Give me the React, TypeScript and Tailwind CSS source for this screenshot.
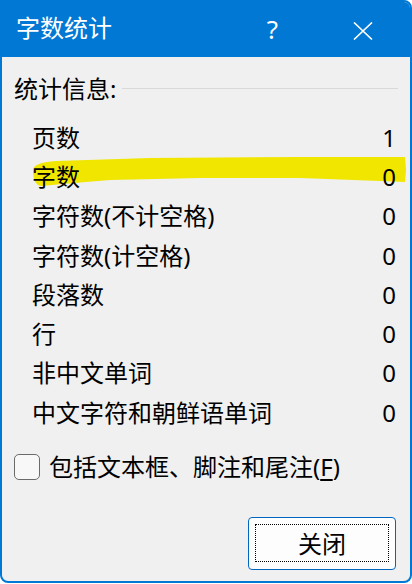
const rows: [string, string][] = [
  ["页数", "1"],
  ["字数", "0"],
  ["字符数(不计空格)", "0"],
  ["字符数(计空格)", "0"],
  ["段落数", "0"],
  ["行", "0"],
  ["非中文单词", "0"],
  ["中文字符和朝鲜语单词", "0"],
];

const font = "font-['Noto_Sans','Noto_Sans_CJK_SC',sans-serif]";

function Highlight() {
  // yellow marker stroke over the 字数 row
  return (
    <svg
      className="pointer-events-none absolute left-0 top-0"
      width="412"
      height="584"
      viewBox="0 0 412 584"
    >
      <path
        d="M33,171 C33,165 40,162 56,161 L150,158 L300,157 L405,157 L406,170 L405,182 L380,181 L300,178 L200,178 L110,180 L62,184 L42,186 C35,186 33,178 33,171 Z"
        fill="#f0e600"
      />
    </svg>
  );
}

export default function App() {
  return (
    <div className={`relative h-[584px] w-[412px] bg-white ${font}`}>
      <div className="flex h-[583px] w-[412px] flex-col overflow-hidden rounded-tr-[8px] rounded-b-[8px] border-2 border-[#0078d4] bg-[#f0f0f0]">
        <div className="flex h-[55px] shrink-0 items-center bg-[#0078d4] text-white">
          <span className="ml-[14px] mt-[-3px] text-[24px] leading-[32px]">字数统计</span>
          <span className="ml-auto mr-[75px] mt-[-2px] text-[26px] leading-[32px]">?</span>
          <svg className="mr-[37px] mt-[3px]" width="20" height="18" viewBox="0 0 20 18">
            <path d="M1,0.5 L19,17.5 M19,0.5 L1,17.5" stroke="white" strokeWidth="1.6" />
          </svg>
        </div>

        <div className="relative z-10 mt-[16px] flex items-center pl-[12px] pr-[12px]">
          <span className="text-[24px] leading-[32px] text-black">统计信息:</span>
          <div className="ml-[6px] mt-[-1px] h-px flex-1 bg-[#d9d9d9]" />
        </div>

        <div className="relative z-10 mt-[13px] flex flex-col">
          {rows.map(([label, value]) => (
            <div
              key={label}
              className="flex h-[39.3px] items-center justify-between pl-[30px] pr-[14px] text-[24px] leading-[32px] text-black"
            >
              <span>{label}</span>
              <span>{value}</span>
            </div>
          ))}
        </div>

        <label className="relative z-10 mt-[19px] flex items-center pl-[12px]">
          <span className="h-[26px] w-[26px] rounded-[5px] border-[1.5px] border-[#6b6b6b] bg-[#f8f8f8]" />
          <span className="ml-[9px] text-[24px] leading-[32px] text-black">
            包括文本框、脚注和尾注(<span className="underline underline-offset-[3px]">F</span>)
          </span>
        </label>

        <div className="mt-[34px] flex justify-end pr-[14px]">
          <button className="relative flex h-[53px] w-[148px] items-center justify-center rounded-[4px] border border-[#0067c0] bg-[#fdfdfd] text-[24px] leading-[32px] text-black">
            <span className="absolute bottom-[7px] left-[6px] right-[6px] top-[6px] border border-dotted border-black" />
            关闭
          </button>
        </div>
      </div>
      <Highlight />
    </div>
  );
}
